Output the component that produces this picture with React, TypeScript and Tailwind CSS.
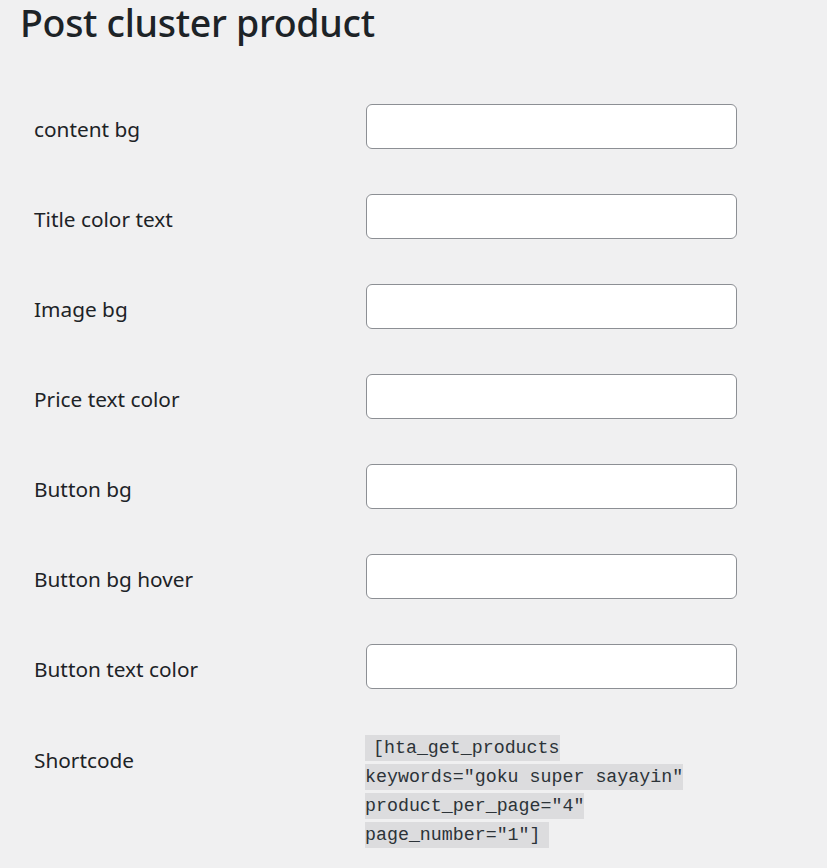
import React from 'react';

const fields = [
  'content bg',
  'Title color text',
  'Image bg',
  'Price text color',
  'Button bg',
  'Button bg hover',
  'Button text color',
];

export default function App() {
  return (
    <div className="min-h-[868px] w-full bg-[#f0f0f1] text-[#1d2327] font-['Noto_Sans','Open_Sans',sans-serif]">
      <div className="pl-[20px]">
        <h1 className="h-[81px] text-[37.5px] leading-[46px] font-medium tracking-[-0.3px]">
          Post cluster product
        </h1>

        {fields.map((label) => (
          <div key={label} className="flex h-[90px] items-center">
            <label className="w-[346px] pl-[14px] pt-[7px] text-[20.8px] leading-[27px]">{label}</label>
            <input
              type="text"
              className="h-[45px] w-[371px] rounded-[6px] border border-[#8c8f94] bg-white px-3 outline-none"
            />
          </div>
        ))}

        <div className="flex pt-[22px]">
          <div className="w-[345px] pl-[14px] pt-[14px] text-[20.8px] leading-[27px]">Shortcode</div>
          <div className="w-[335px] font-['DejaVu_Sans_Mono','Liberation_Mono',monospace] text-[18.3px] leading-[28px] text-[#2c3338]">
            <code className="bg-[#dcdcde] py-[3px] pl-[8px] pr-[8px] [box-decoration-break:slice]">
              [hta_get_products keywords="goku super sayayin" product_per_page="4" page_number="1"]
            </code>
          </div>
        </div>
      </div>
    </div>
  );
}
